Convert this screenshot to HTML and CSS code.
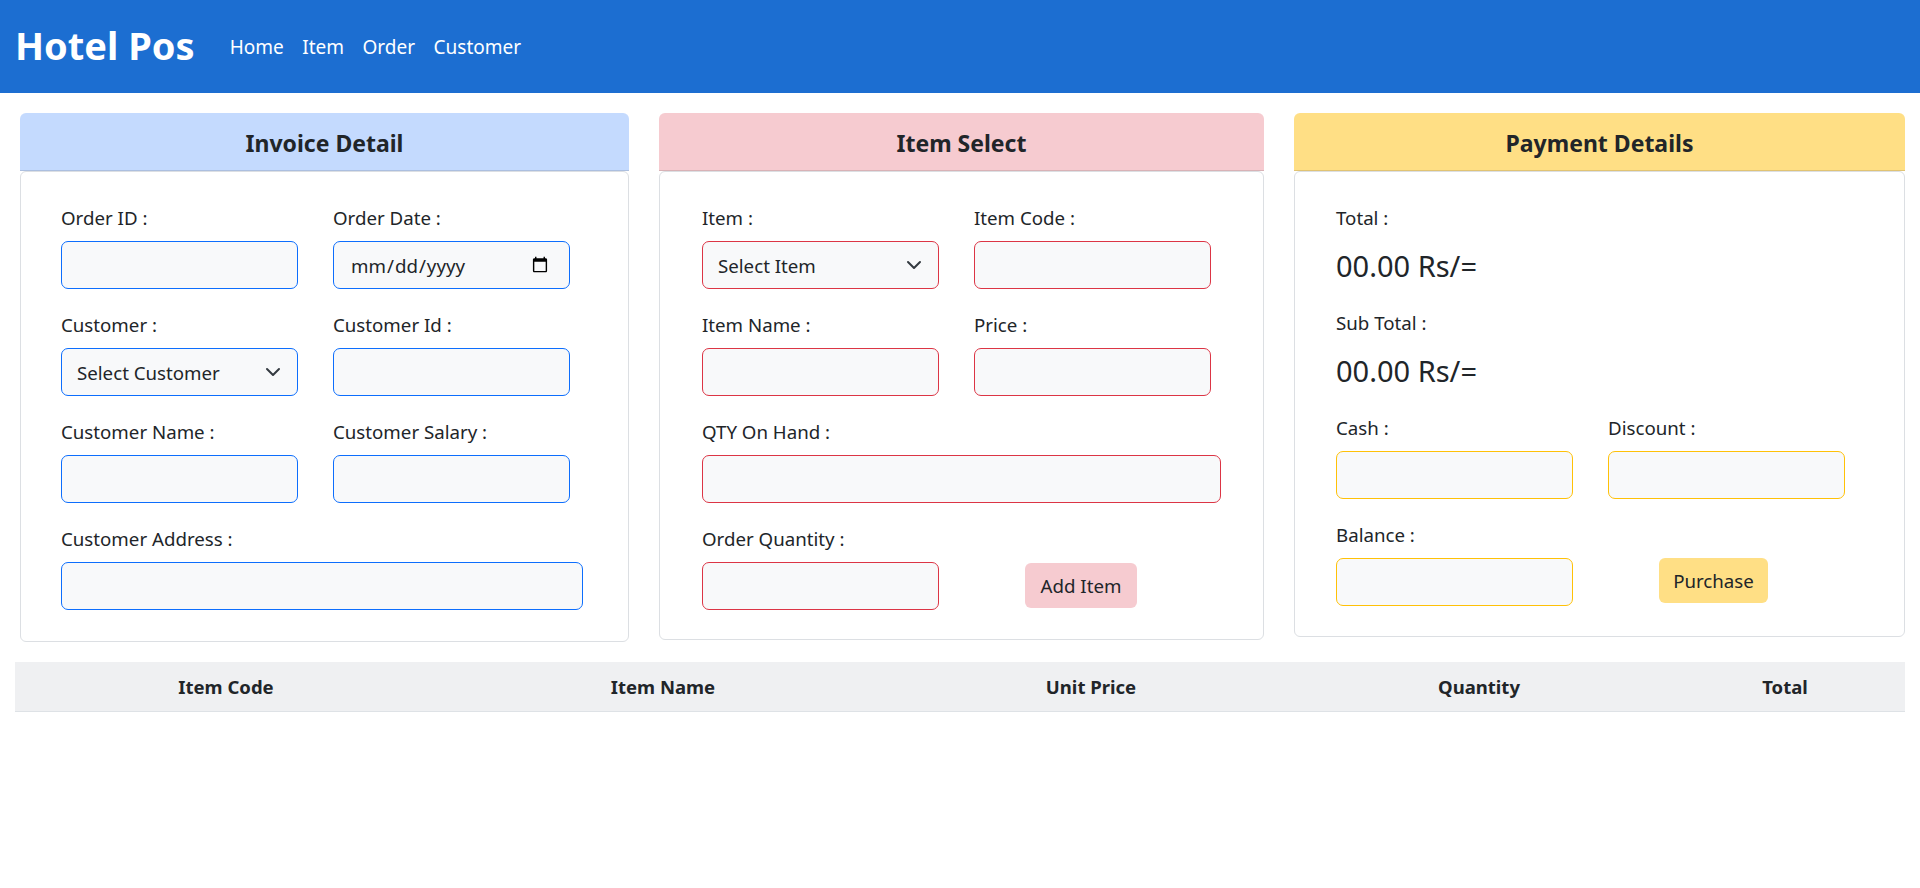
FILE: index.html
```html
<!DOCTYPE html>
<html lang="en">
<head>
<meta charset="utf-8">
<title>Hotel Pos</title>
<link rel="stylesheet" href="styles.css">
</head>
<body>
<nav class="navbar">
  <a class="brand" href="#">Hotel Pos</a>
  <ul class="nav">
    <li><a href="#">Home</a></li>
    <li><a href="#">Item</a></li>
    <li><a href="#">Order</a></li>
    <li><a href="#">Customer</a></li>
  </ul>
</nav>

<main class="page">
  <section class="panels">
    <div class="panel">
      <div class="panel-head head-blue"><h4>Invoice Detail</h4></div>
      <div class="panel-body body-invoice">
        <div class="form-grid">
          <div class="field">
            <label class="lbl">Order ID :</label>
            <input class="ctl ctl-blue" type="text">
          </div>
          <div class="field">
            <label class="lbl">Order Date :</label>
            <input class="ctl ctl-blue ctl-date" type="date">
          </div>
          <div class="field">
            <label class="lbl">Customer :</label>
            <div class="select-wrap">
              <select class="ctl ctl-blue ctl-select"><option>Select Customer</option></select>
              <svg class="chev" viewBox="0 0 16 16" width="16" height="16"><path d="m2 5 6 6 6-6" fill="none" stroke="#343a40" stroke-width="2" stroke-linecap="round" stroke-linejoin="round"/></svg>
            </div>
          </div>
          <div class="field">
            <label class="lbl">Customer Id :</label>
            <input class="ctl ctl-blue" type="text">
          </div>
          <div class="field">
            <label class="lbl">Customer Name :</label>
            <input class="ctl ctl-blue" type="text">
          </div>
          <div class="field">
            <label class="lbl">Customer Salary :</label>
            <input class="ctl ctl-blue" type="text">
          </div>
          <div class="field field-full">
            <label class="lbl">Customer Address :</label>
            <input class="ctl ctl-blue ctl-full" type="text">
          </div>
        </div>
      </div>
    </div>

    <div class="panel">
      <div class="panel-head head-pink"><h4>Item Select</h4></div>
      <div class="panel-body body-item">
        <div class="form-grid">
          <div class="field">
            <label class="lbl">Item :</label>
            <div class="select-wrap">
              <select class="ctl ctl-red ctl-select"><option>Select Item</option></select>
              <svg class="chev" viewBox="0 0 16 16" width="16" height="16"><path d="m2 5 6 6 6-6" fill="none" stroke="#343a40" stroke-width="2" stroke-linecap="round" stroke-linejoin="round"/></svg>
            </div>
          </div>
          <div class="field">
            <label class="lbl">Item Code :</label>
            <input class="ctl ctl-red" type="text">
          </div>
          <div class="field">
            <label class="lbl">Item Name :</label>
            <input class="ctl ctl-red" type="text">
          </div>
          <div class="field">
            <label class="lbl">Price :</label>
            <input class="ctl ctl-red" type="text">
          </div>
          <div class="field field-full">
            <label class="lbl">QTY On Hand :</label>
            <input class="ctl ctl-red ctl-full" type="text">
          </div>
          <div class="field">
            <label class="lbl">Order Quantity :</label>
            <input class="ctl ctl-red" type="text">
          </div>
          <div class="field field-btn">
            <button class="btn btn-pink" type="button">Add Item</button>
          </div>
        </div>
      </div>
    </div>

    <div class="panel">
      <div class="panel-head head-yellow"><h4>Payment Details</h4></div>
      <div class="panel-body body-pay">
        <div class="stat">
          <label class="lbl">Total :</label>
          <div class="amount">00.00 Rs/=</div>
        </div>
        <div class="stat">
          <label class="lbl">Sub Total :</label>
          <div class="amount">00.00 Rs/=</div>
        </div>
        <div class="form-grid">
          <div class="field">
            <label class="lbl">Cash :</label>
            <input class="ctl ctl-yellow" type="text">
          </div>
          <div class="field">
            <label class="lbl">Discount :</label>
            <input class="ctl ctl-yellow" type="text">
          </div>
          <div class="field">
            <label class="lbl">Balance :</label>
            <input class="ctl ctl-yellow" type="text">
          </div>
          <div class="field field-btn">
            <button class="btn btn-yellow" type="button">Purchase</button>
          </div>
        </div>
      </div>
    </div>
  </section>

  <table class="items">
    <thead>
      <tr>
        <th class="c-code">Item Code</th>
        <th class="c-name">Item Name</th>
        <th class="c-price">Unit Price</th>
        <th class="c-qty">Quantity</th>
        <th class="c-total">Total</th>
      </tr>
    </thead>
    <tbody></tbody>
  </table>
</main>
</body>
</html>
```

FILE: styles.css
```css
* { box-sizing: border-box; }

html, body {
  margin: 0;
  padding: 0;
  background: #ffffff;
  color: #212529;
  font-family: "Segoe UI", "Noto Sans", "Open Sans", sans-serif;
}

/* ---------- navbar ---------- */
.navbar {
  height: 93px;
  background: #1c6ed1;
  display: flex;
  align-items: center;
  padding-left: 15px;
}
.brand {
  color: #ffffff;
  font-weight: 700;
  font-size: 38px;
  line-height: 1.2;
  text-decoration: none;
  margin-right: 35px;
  padding-bottom: 2px;
}
.nav {
  list-style: none;
  margin: 0;
  padding: 0;
  display: flex;
  gap: 18.5px;
}
.nav a {
  color: #ffffff;
  text-decoration: none;
  font-size: 19px;
  line-height: 30px;
}

/* ---------- page ---------- */
.page {
  padding: 20px 15px 0 15px;
}

.panels {
  display: grid;
  grid-template-columns: 609fr 605fr 611fr;
  column-gap: 30px;
  align-items: start;
  padding-left: 5px;
}

.panel-head {
  height: 58px;
  border-radius: 6px 6px 0 0;
  border-bottom: 1px solid rgba(0, 0, 0, 0.12);
  display: flex;
  align-items: center;
  justify-content: center;
}
.panel-head h4 {
  margin: 0;
  font-size: 23px;
  font-weight: 700;
  line-height: 1.2;
  padding-top: 4px;
}
.head-blue { background: #c4dafe; }
.head-pink { background: #f6cbd0; }
.head-yellow { background: #ffdf85; }

.panel-body {
  border: 1px solid #dcdfe3;
  border-radius: 6px;
  padding: 31px 45px 29px 41px;
}
.body-invoice { padding-bottom: 31px; padding-left: 40px; }
.body-item { padding-right: 42px; padding-left: 42px; }
.body-pay { padding-left: 41px; padding-bottom: 30px; }

/* ---------- form ---------- */
.form-grid {
  display: grid;
  grid-template-columns: 272px 1fr;
  row-gap: 21px;
}
.field {
  display: flex;
  flex-direction: column;
}
.field-full {
  grid-column: 1 / -1;
}
.field-btn {
  justify-content: flex-end;
  align-items: flex-start;
  padding-left: 51px;
}

.lbl {
  display: block;
  font-size: 18.7px;
  line-height: 30px;
  margin-bottom: 8px;
}

.ctl {
  width: 237px;
  height: 48px;
  border-radius: 7px;
  border: 1px solid #0d6efd;
  background: #f8f9fa;
  font-family: inherit;
  font-size: 18.7px;
  color: #212529;
  padding: 0 15px;
  outline: none;
}
.ctl-full { width: 100%; }
.ctl-blue { border-color: #0d6efd; }
.ctl-red { border-color: #dc3545; }
.ctl-yellow { border-color: #ffc107; }

.ctl-date {
  padding: 0 16px 0 16px;
}
.ctl-date::-webkit-calendar-picker-indicator {
  width: 18px;
  height: 18px;
  margin-right: 2px;
  opacity: 1;
}

.select-wrap {
  position: relative;
  width: 237px;
}
.ctl-select {
  -webkit-appearance: none;
  appearance: none;
  width: 100%;
  padding-left: 15px;
}
.chev {
  position: absolute;
  right: 17px;
  top: 16px;
  pointer-events: none;
}

.btn {
  border: none;
  border-radius: 6px;
  font-family: inherit;
  font-size: 18.7px;
  color: #212529;
  height: 45px;
  padding: 0 14px;
  margin-bottom: 2px;
}
.btn-pink { background: #f6cbd0; width: 112px; }
.btn-yellow { background: #ffdf85; width: 109px; margin-bottom: 3px; }

/* ---------- payment stats ---------- */
.stat {
  margin-bottom: 25px;
}
.amount {
  font-size: 29px;
  line-height: 34px;
  margin-top: 16px;
}

/* ---------- table ---------- */
.items {
  width: 100%;
  margin-top: 20px;
  border-collapse: collapse;
  table-layout: fixed;
}
.items th {
  background: #eff0f2;
  font-weight: 700;
  font-size: 18.5px;
  line-height: 30px;
  padding: 10px 8px 9px;
  text-align: center;
  border-bottom: 1px solid #dee2e6;
}
.c-code { width: 422px; }
.c-name { width: 452px; }
.c-price { width: 404px; }
.c-qty { width: 372px; }
.c-total { width: 240px; }
```
